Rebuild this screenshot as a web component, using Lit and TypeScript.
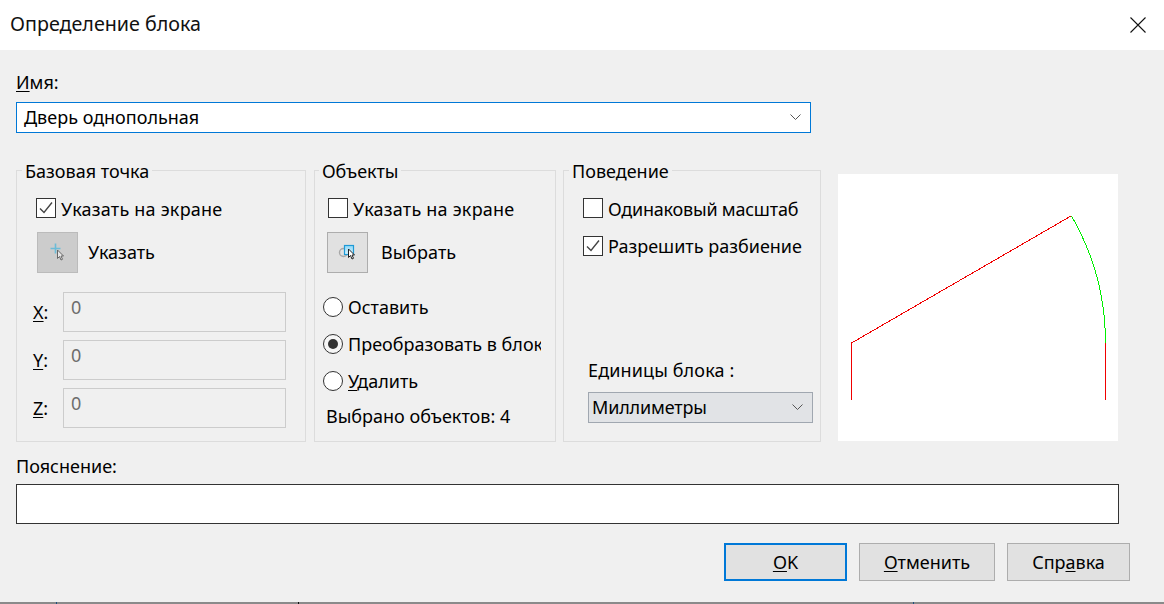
import { LitElement, html, css, svg } from "lit";
import { customElement } from "lit/decorators.js";

const check = svg`<svg class="tick" viewBox="0 0 18 18"><path d="M3 9.5 7 13.5 15 3.5" fill="none" stroke="#444" stroke-width="1.4"/></svg>`;
const chevron = svg`<svg class="chev" viewBox="0 0 11 7"><path d="M.5 .5 5.5 5.5 10.5 .5" fill="none" stroke="#555" stroke-width="1"/></svg>`;

@customElement("app-root")
export class AppRoot extends LitElement {
  static styles = css`
    :host { display: block; width: 1164px; height: 604px; overflow: hidden; background: #f0f0f0; color: #000;
      font-family: "Noto Sans", "Open Sans", sans-serif; font-size: 18px; line-height: 20px; }
    * { box-sizing: border-box; }
    .dialog { position: relative; display: flex; flex-direction: column; height: 604px; }
    .title { height: 50px; flex: none; background: #fff; display: flex; align-items: center; justify-content: space-between; padding: 0 18px 2px 10px; font-size: 19.7px; color: #111; }
    .close { width: 16px; height: 16px; display: block; margin-top: 2px; }
    .body { padding: 0 0 0 16px; flex: 1; display: flex; flex-direction: column; }
    .name-label { margin-top: 22px; height: 20px; }
    .combo { margin-top: 10px; width: 795px; height: 31px; background: #fff; border: 1.5px solid #0078d7; display: flex; align-items: center; justify-content: space-between; padding: 0 9px 2px 7px; }
    .combo .chev { margin-top: 2px; }
    .chev { width: 11px; height: 7px; display: block; }
    .row { display: flex; margin-top: 37px; height: 272px; }
    .group { position: relative; border: 1px solid #dcdcdc; display: flex; flex-direction: column; flex: none; height: 272px; padding-top: 27px; }
    .legend { position: absolute; top: -10px; left: 5px; padding: 0 3px; background: #f0f0f0; white-space: nowrap; }
    .g2 .legend { left: 4px; letter-spacing: -0.1px; }
    .g1 { width: 290px; padding-left: 19px; }
    .g2 { width: 242px; margin-left: 8px; padding-left: 13px; }
    .g3 { width: 258px; margin-left: 7px; padding-left: 19px; }
    .opt { display: flex; align-items: center; height: 20px; white-space: nowrap; }
    .opt-lbl { padding-top: 2px; }
    .wide-lbl { letter-spacing: 0.22px; }
    .tight-lbl { letter-spacing: -0.22px; }
    .low-lbl { padding-bottom: 1px; }
    .box { width: 20px; height: 20px; flex: none; background: #fff; border: 1px solid #333; margin-right: 5px; display: block; }
    .tick { width: 18px; height: 18px; display: block; }
    .pick { display: flex; align-items: center; margin-top: 14px; height: 41px; }
    .pick span { padding-bottom: 2px; }
    .g1 .pick { margin-left: 1px; }
    .g2 .pick { margin-left: -1px; }
    .tool { width: 41px; height: 41px; border: 1px solid #adadad; background: #e1e1e1; flex: none; }
    .tool svg { width: 39px; height: 39px; display: block; }
    .tool.off { background: #ccc; border-color: #bbb; }
    .g1 .tool + span { margin-left: 10px; }
    .g2 .tool + span { margin-left: 13px; }
    .coords { margin: 19px 0 0 -3px; display: grid; grid-template-columns: 30px 223px; row-gap: 8px; grid-auto-rows: 40px; align-items: center; }
    .field { height: 40px; border: 1px solid #ccc; background: #f0f0f0; color: #6d6d6d; padding: 4px 7px; }
    .radios { margin: 24px 0 0 -5px; display: flex; flex-direction: column; gap: 17px; }
    .radio { width: 20px; height: 20px; border: 1px solid #333; border-radius: 50%; background: #fff; flex: none; margin-right: 5px; display: flex; align-items: center; justify-content: center; }
    .radio.on { background: #f6f6f6; }
    .radio.on::after { content: ""; width: 10px; height: 10px; border-radius: 50%; background: #333; }
    .clip { width: 193px; overflow: hidden; }
    .count { margin: 15px 0 0 -2px; height: 20px; white-space: nowrap; }
    .g3 .opt + .opt { margin-top: 18px; }
    .units { margin-top: auto; padding-left: 5px; height: 20px; white-space: nowrap; letter-spacing: 0.13px; }
    .select { margin: 12px 0 18px 5px; width: 225px; height: 31px; flex: none; background: #e1e3e6; border: 1px solid #a0a7b0; display: flex; align-items: center; justify-content: space-between; padding: 0 9px 1px 3px; letter-spacing: -0.15px; }
    .select .chev { margin-top: 1px; }
    .preview { flex: none; margin: 4px 0 0 17px; width: 280px; height: 267px; background: #fff; display: block; }
    .desc-label { margin-top: 14px; height: 20px; }
    .desc { margin-top: 8px; width: 1103px; height: 40px; background: #fff; border: 1px solid #333; flex: none; }
    .buttons { display: flex; margin: 19px 0 0 708px; }
    .btn { height: 38px; width: 123px; background: #e1e1e1; border: 1px solid #adadad; display: flex; align-items: center; justify-content: center; margin-left: 12px; flex: none; }
    .btn:first-child { margin-left: 0; border: 2px solid #0078d7; }
    .btn.wide { width: 136px; }
    .edge { position: absolute; left: 0; right: 0; bottom: 0; height: 2px; background: #8a8a8a; }
    .edge i { position: absolute; top: 0; width: 1px; height: 2px; }
    u { text-underline-offset: 2px; text-decoration-thickness: 1px; }
  `;

  render() {
    return html`<div class="dialog">
      <div class="title"><span>Определение блока</span>
        <svg class="close" viewBox="0 0 16 16"><path d="M.5 .5 15.5 15.5M15.5 .5 .5 15.5" stroke="#111" stroke-width="1.1" fill="none"/></svg>
      </div>
      <div class="body">
        <div class="name-label"><u>И</u>мя:</div>
        <div class="combo"><span>Дверь однопольная</span>${chevron}</div>
        <div class="row">
          <section class="group g1">
            <div class="legend">Базовая точка</div>
            <div class="opt"><span class="box">${check}</span><span class="opt-lbl wide-lbl">Указать на экране</span></div>
            <div class="pick">
              <div class="tool off"><svg viewBox="38 233 39 39">
                <path d="M50.5 248.5H60.5M55.5 243.5V253.5" stroke="#6cbcd8" stroke-width="1.6" fill="none"/>
                <path d="M57.5 250V258.5L59.5 256.5 61 260 62.5 259.3 61 256H63.5Z" fill="#e6e6e6" stroke="#666" stroke-width="1"/>
              </svg></div>
              <span>Указать</span>
            </div>
            <div class="coords">
              <span><u>X</u>:</span><div class="field">0</div>
              <span><u>Y</u>:</span><div class="field">0</div>
              <span><u>Z</u>:</span><div class="field">0</div>
            </div>
          </section>
          <section class="group g2">
            <div class="legend">Объекты</div>
            <div class="opt"><span class="box"></span><span class="opt-lbl wide-lbl">Указать на экране</span></div>
            <div class="pick">
              <div class="tool"><svg viewBox="328 233 39 39">
                <defs><linearGradient id="sq" x1="0" y1="0" x2="0" y2="1"><stop offset="0" stop-color="#8fd8f8"/><stop offset="1" stop-color="#d8f2fc"/></linearGradient></defs>
                <circle cx="343.5" cy="252.5" r="4" fill="none" stroke="#a8a8a8" stroke-width="1.4"/>
                <rect x="344.5" y="245.5" width="9" height="9" fill="url(#sq)" stroke="#1e9ad6" stroke-width="1.2"/>
                <path d="M348.5 249V257.5L350.5 255.5 352 259 353.5 258.3 352 255H354.5Z" fill="#fff" stroke="#222" stroke-width="1"/>
              </svg></div>
              <span>Выбрать</span>
            </div>
            <div class="radios">
              <div class="opt"><span class="radio"></span><span class="low-lbl">Оставить</span></div>
              <div class="opt"><span class="radio on"></span><span class="clip low-lbl">Преобразовать в блок</span></div>
              <div class="opt"><span class="radio"></span><span class="low-lbl"><u>У</u>далить</span></div>
            </div>
            <div class="count">Выбрано объектов: 4</div>
          </section>
          <section class="group g3">
            <div class="legend">Поведение</div>
            <div class="opt"><span class="box"></span><span class="opt-lbl tight-lbl">Одинаковый масштаб</span></div>
            <div class="opt"><span class="box">${check}</span><span class="low-lbl">Разрешить разбиение</span></div>
            <div class="units">Единицы блока :</div>
            <div class="select"><span>Миллиметры</span>${chevron}</div>
          </section>
          <svg class="preview" viewBox="838 174 280 267" shape-rendering="crispEdges">
            <path d="M851.5 400V343L1071 216M1105.5 343V400" fill="none" stroke="#f00000" stroke-width="1"/>
            <path d="M1071.5 216A254 254 0 0 1 1105.5 343" fill="none" stroke="#00f000" stroke-width="1"/>
          </svg>
        </div>
        <div class="desc-label">Пояснение:</div>
        <div class="desc"></div>
        <div class="buttons">
          <div class="btn"><span><u>O</u>K</span></div>
          <div class="btn wide"><span><u>О</u>тменить</span></div>
          <div class="btn"><span>Спр<u>а</u>вка</span></div>
        </div>
      </div>
      <div class="edge"><i style="left:56px;background:#1c4f80"></i><i style="left:298px;background:#111"></i><i style="left:913px;background:#1c4f80"></i></div>
    </div>`;
  }
}
